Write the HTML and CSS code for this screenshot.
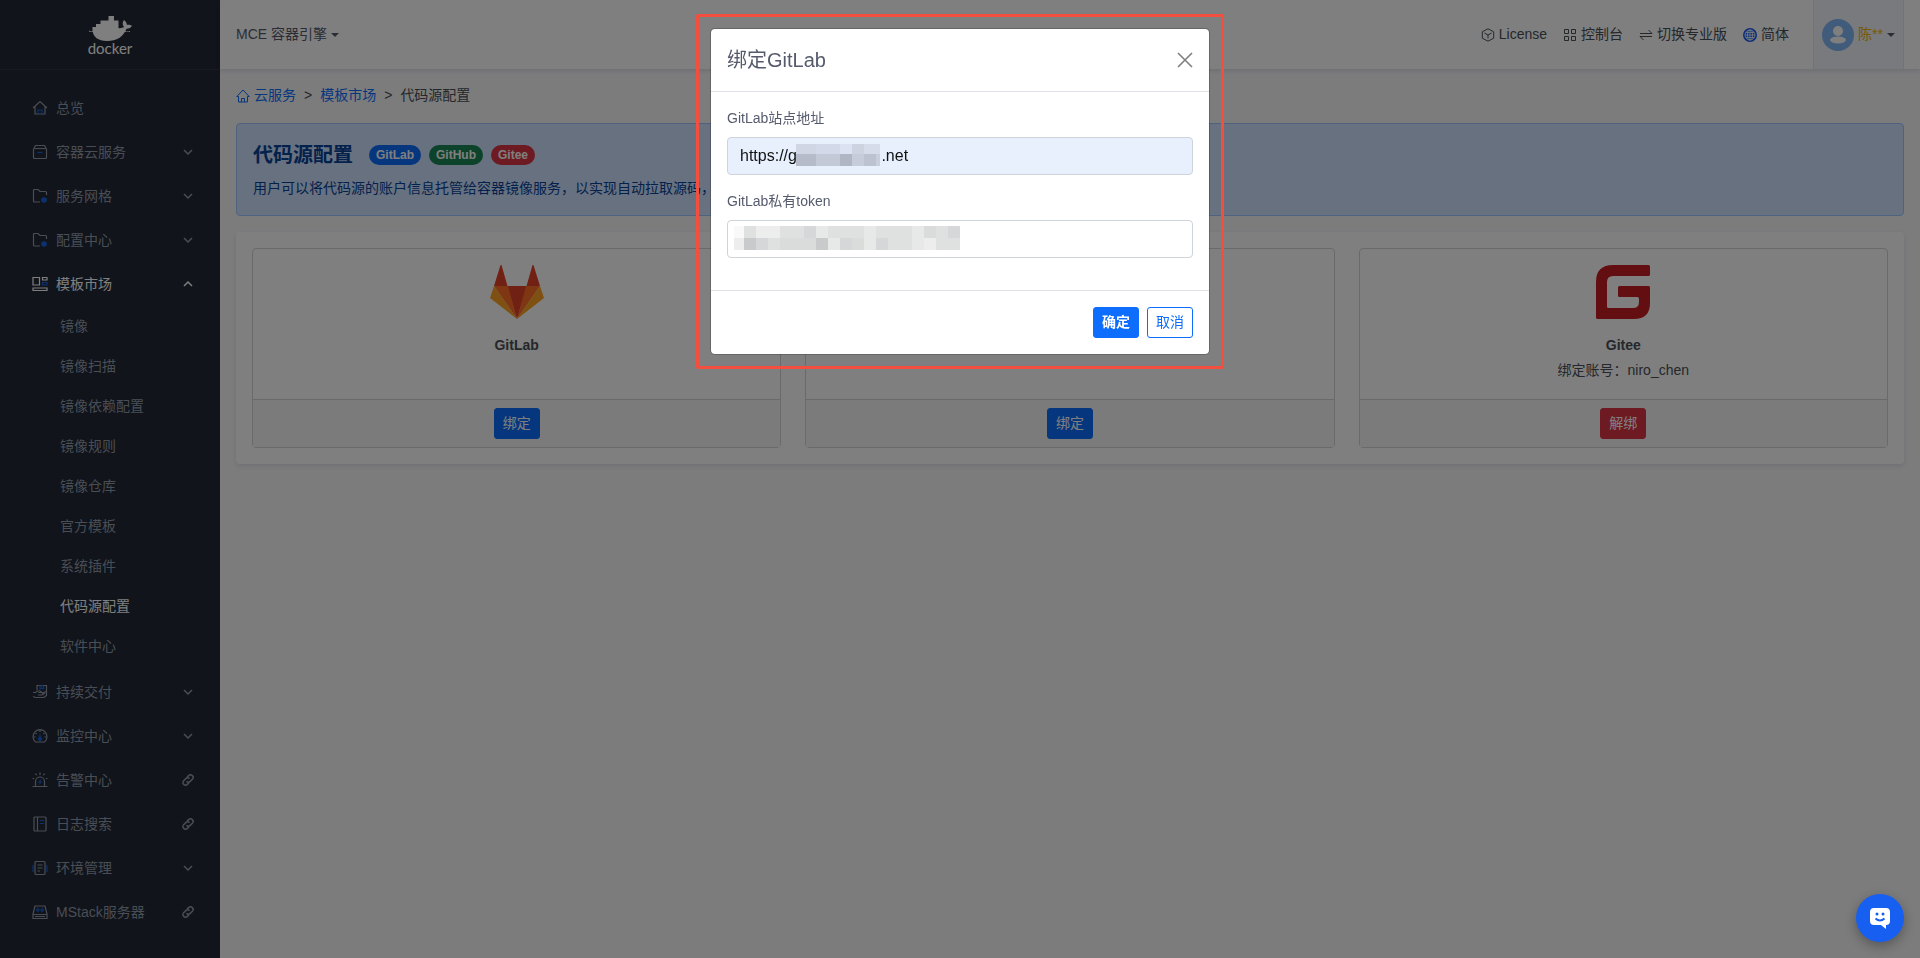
FILE: index.html
```html
<!DOCTYPE html>
<html lang="zh-CN">
<head>
    <meta charset="UTF-8">
    <meta name="viewport" content="width=device-width, initial-scale=1.0">
    <title>代码源配置</title>
    <link rel="stylesheet" href="styles.css">
</head>
<body>
    <!-- shared icons -->
    <svg class="sprite" aria-hidden="true">
        <symbol id="i-down" viewBox="0 0 12 12"><path d="M2 4l4 4 4-4"/></symbol>
        <symbol id="i-up" viewBox="0 0 12 12"><path d="M2 8l4-4 4 4"/></symbol>
        <symbol id="i-link" viewBox="0 0 12 12"><path d="M5 3.2l1.6-1.6a2.6 2.6 0 0 1 3.7 3.7L8.200 7.400a2.600 2.600 0 0 1-3.700 0M7 8.800l-1.600 1.600a2.600 2.600 0 0 1-3.700-3.700L3.800 4.600a2.600 2.600 0 0 1 3.700 0"/></symbol>
        <symbol id="i-folder" viewBox="0 0 16 16"><path d="M8 14H2.500a1 1 0 0 1-1-1V2.500a1 1 0 0 1 1-1H6l2 2h5.500a1 1 0 0 1 1 1V7"/><circle class="fill" cx="12" cy="12" r="2.800"/></symbol>
    </svg>

    <div class="layout">
        <aside class="sidebar">
            <a class="logo" href="#">
                <svg width="44" height="26" viewBox="0 0 44 26"><path d="M20.500 0H26v4.500h4.500V12c2 .5 4-.2 5.500-1-1.700-2-1.800-5 0-7 2 1.500 2.800 3 2.800 4.800 2-.4 4 0 5.200 1-1 2-3 3-5.500 3C35 21 29 25 19 25 10 25 5 21 4.500 14v-3H8V8h4.500V4.500h8z"/><path d="M1 14.500c1.500 1 3 1 4.500 0v1.200H1zM37 15c1.500.8 3 .8 5 0v1h-5z"/></svg>
                <span>docker</span>
            </a>
            <nav class="menu">
                <a class="menu-item" href="#">
                    <svg class="icon" viewBox="0 0 16 16"><path d="M1 8l7-6.500L15 8M3 6.500V14h10V6.500"/><path class="accent" d="M6 14v-4h4v4"/></svg>
                    <span>总览</span>
                </a>
                <a class="menu-item" href="#">
                    <svg class="icon" viewBox="0 0 16 16"><rect x="1.500" y="4.500" width="13" height="10" rx="1"/><path d="M1.800 4.500l1.700-3h9l1.700 3"/><path class="accent" d="M5.500 8.500h5"/></svg>
                    <span>容器云服务</span>
                    <svg class="arrow"><use href="#i-down"/></svg>
                </a>
                <a class="menu-item" href="#">
                    <svg class="icon"><use href="#i-folder"/></svg>
                    <span>服务网格</span>
                    <svg class="arrow"><use href="#i-down"/></svg>
                </a>
                <a class="menu-item" href="#">
                    <svg class="icon"><use href="#i-folder"/></svg>
                    <span>配置中心</span>
                    <svg class="arrow"><use href="#i-down"/></svg>
                </a>
                <a class="menu-item active" href="#">
                    <svg class="icon" viewBox="0 0 16 16"><path d="M1 1.500h6.500V9H1zM1 12h14v2.500H1zM10.500 1.500H15V4h-4.500z"/><path class="accent" d="M10.500 6.500H15V9h-4.500z"/></svg>
                    <span>模板市场</span>
                    <svg class="arrow"><use href="#i-up"/></svg>
                </a>
                <div class="submenu">
                    <a href="#">镜像</a>
                    <a href="#">镜像扫描</a>
                    <a href="#">镜像依赖配置</a>
                    <a href="#">镜像规则</a>
                    <a href="#">镜像仓库</a>
                    <a href="#">官方模板</a>
                    <a href="#">系统插件</a>
                    <a class="active" href="#">代码源配置</a>
                    <a href="#">软件中心</a>
                </div>
                <a class="menu-item" href="#">
                    <svg class="icon" viewBox="0 0 16 16"><path d="M5 6V1.500h9.500v10L12 13.500H3.500L1 12.500M1 8.500h2.500l2-1.500H8l2 1.500H6.500M10 9.500l4-2M6 11h4l3-2"/><path class="accent" d="M8 2v3l1.700-1L11.500 5V2z"/></svg>
                    <span>持续交付</span>
                    <svg class="arrow"><use href="#i-down"/></svg>
                </a>
                <a class="menu-item" href="#">
                    <svg class="icon" viewBox="0 0 16 16"><path d="M3.500 14a7 7 0 1 1 9 0zM8 2v2M3.500 5l1 1M12.500 5l-1 1M2 9h1.500M14 9h-1.500"/><path class="fill" d="M8 5l1 4.200a2 2 0 1 1-2 0z"/></svg>
                    <span>监控中心</span>
                    <svg class="arrow"><use href="#i-down"/></svg>
                </a>
                <a class="menu-item" href="#">
                    <svg class="icon" viewBox="0 0 16 16"><path d="M.5 14.500h15M3.500 14V9.500a4.500 4.500 0 0 1 9 0V14M8 .5V3M3.500 1.500l1 1.700M12.500 1.500l-1 1.700M.5 6.500h1.700M15.500 6.500h-1.700"/><path class="fill" d="M9 7l-3 3.500h1.700L7.200 13l3-3.500H8.500z"/></svg>
                    <span>告警中心</span>
                    <svg class="arrow"><use href="#i-link"/></svg>
                </a>
                <a class="menu-item" href="#">
                    <svg class="icon" viewBox="0 0 16 16"><rect x="2" y="1" width="12" height="14" rx="1"/><path d="M5.500 1v14"/><path class="accent" d="M8 4.500h4M8 7.500h4"/></svg>
                    <span>日志搜索</span>
                    <svg class="arrow"><use href="#i-link"/></svg>
                </a>
                <a class="menu-item" href="#">
                    <svg class="icon" viewBox="0 0 16 16"><rect x="3" y="1.500" width="10" height="13" rx="1"/><path d="M5.500 5h5M5.500 8h5M5.500 11H8"/><path class="accent" d="M1 5v7M15 5v7"/></svg>
                    <span>环境管理</span>
                    <svg class="arrow"><use href="#i-down"/></svg>
                </a>
                <a class="menu-item" href="#">
                    <svg class="icon" viewBox="0 0 16 16"><path d="M1 10L3 2h10l2 8v4.500H1zM1 10.500h14M3 12.500h10"/><path class="accent" d="M6.500 4L4.500 6l2 2M9.500 4l2 2-2 2M6 6h4"/></svg>
                    <span>MStack服务器</span>
                    <svg class="arrow"><use href="#i-link"/></svg>
                </a>
            </nav>
        </aside>

        <div class="main">
            <header class="topbar">
                <button class="engine caret" type="button">MCE 容器引擎</button>
                <div class="tools">
                    <a href="#">
                        <svg width="14" height="14" viewBox="0 0 14 14"><path d="M7 .8l5.700 3v6.400L7 13.200l-5.700-3V3.800zM3.500 5L7 7l3.500-2M7 7v3.500"/></svg>
                        License
                    </a>
                    <a href="#">
                        <svg width="14" height="14" viewBox="0 0 14 14"><path d="M1.500 1.500h4v4h-4zM8.500 1.500h4v4h-4zM1.500 8.500h4v4h-4zM8.500 8.500h4v4h-4z"/></svg>
                        控制台
                    </a>
                    <a href="#">
                        <svg width="14" height="14" viewBox="0 0 14 14"><path d="M1 5.500h12L9.500 2M13 8.500H1L4.500 12"/></svg>
                        切换专业版
                    </a>
                    <a href="#">
                        <svg class="globe" width="14" height="14" viewBox="0 0 14 14"><circle cx="7" cy="7" r="7"/><path d="M7 2v10M2 7h10M3 4.500h8M3 9.500h8"/><ellipse cx="7" cy="7" rx="2.500" ry="5"/><ellipse cx="7" cy="7" rx="5" ry="5"/></svg>
                        简体
                    </a>
                </div>
                <button class="user caret" type="button">
                    <svg width="32" height="32" viewBox="0 0 32 32"><circle cx="16" cy="16" r="16" fill="#82b6f5"/><circle cx="16" cy="12" r="5" fill="#fff"/><ellipse cx="16" cy="21" rx="8" ry="3.500" fill="#fff"/></svg>
                    <span>陈**</span>
                </button>
            </header>

            <main class="content">
                <nav class="breadcrumb">
                    <a href="#">
                        <svg width="14" height="14" viewBox="0 0 14 14"><path d="M.8 7.500L7 1l6.200 6.500H11.500V13h-9V7.500zM5.500 13V9.500h3V13"/></svg>
                        云服务
                    </a>
                    <span>&gt;</span>
                    <a href="#">模板市场</a>
                    <span>&gt;</span>
                    <span>代码源配置</span>
                </nav>

                <section class="intro">
                    <div class="intro-head">
                        <h1>代码源配置</h1>
                        <span class="badge blue">GitLab</span>
                        <span class="badge green">GitHub</span>
                        <span class="badge red">Gitee</span>
                    </div>
                    <p>用户可以将代码源的账户信息托管给容器镜像服务，以实现自动拉取源码，</p>
                </section>

                <section class="sources">
                    <article class="card">
                        <div class="card-body">
                            <svg width="54" height="54" viewBox="0 0 54 54"><path fill="#e24329" d="M27 54L17 21h20zM11.500 0h-1L4 21h13.500zM42.500 0h1L50 21H36.500z"/><path fill="#fc6d26" d="M27 54L4 21h14zM27 54l23-33H36z"/><path fill="#fca326" d="M4 21L0 33l27 21zM50 21l4 12-27 21z"/></svg>
                            <h2>GitLab</h2>
                        </div>
                        <div class="card-footer"><button class="btn primary" type="button">绑定</button></div>
                    </article>
                    <article class="card">
                        <div class="card-body">
                            <svg width="54" height="54" viewBox="0 0 16 16"><path d="M8 0C3.580 0 0 3.580 0 8c0 3.540 2.290 6.530 5.470 7.590.4.070.55-.17.55-.38 0-.19-.01-.82-.01-1.490-2.010.37-2.530-.49-2.690-.94-.09-.23-.48-.94-.82-1.130-.28-.15-.68-.52-.01-.53.63-.01 1.080.58 1.230.82.72 1.210 1.870.87 2.330.66.07-.52.28-.87.51-1.070-1.780-.2-3.640-.89-3.640-3.950 0-.87.31-1.590.82-2.150-.08-.2-.36-1.020.08-2.120 0 0 .67-.21 2.200.82a7.600 7.600 0 0 1 4 0c1.530-1.040 2.200-.82 2.200-.82.44 1.100.16 1.920.08 2.120.51.56.82 1.270.82 2.150 0 3.070-1.870 3.750-3.650 3.950.29.25.54.73.54 1.480 0 1.070-.01 1.930-.01 2.200 0 .21.15.46.55.38A8 8 0 0 0 16 8c0-4.420-3.580-8-8-8z"/></svg>
                            <h2>GitHub</h2>
                        </div>
                        <div class="card-footer"><button class="btn primary" type="button">绑定</button></div>
                    </article>
                    <article class="card">
                        <div class="card-body">
                            <svg width="54" height="54" viewBox="0 0 54 54"><path fill="#c71d23" d="M17 0h35.500Q54 0 54 1.500v8q0 1.500-1.500 1.500H17q-6 0-6 6v24.500q0 1.500 1.500 1.500H37q6 0 6-6v-3q0-2-1.500-2h-18Q22 32 22 30.500v-8q0-1.500 1.500-1.500h29q1.500 0 1.500 1.500V38q0 16-16 16H1.500Q0 54 0 52.500V17Q0 0 17 0z"/></svg>
                            <h2>Gitee</h2>
                            <p>绑定账号：niro_chen</p>
                        </div>
                        <div class="card-footer"><button class="btn danger" type="button">解绑</button></div>
                    </article>
                </section>
            </main>
        </div>
    </div>

    <div class="backdrop">
        <form class="modal" role="dialog" aria-labelledby="modal-title">
            <div class="modal-header">
                <h2 id="modal-title">绑定GitLab</h2>
                <button class="close" type="button" aria-label="关闭">
                    <svg width="16" height="16" viewBox="0 0 16 16"><path d="M1 1l14 14M15 1L1 15"/></svg>
                </button>
            </div>
            <div class="modal-body">
                <label for="site">GitLab站点地址</label>
                <div class="field">
                    <input class="filled" id="site" type="text" value="https://g                   .net">
                    <svg class="mask mask-site" width="84" height="22" shape-rendering="crispEdges"><path fill="#d0d6e4" d="M0 0h20v10H0z"/><path fill="#d3d9e8" d="M20 0h24v10H20z"/><path fill="#dce2f1" d="M44 0h12v10H44z"/><path fill="#cdd3e1" d="M56 0h12v10H56z"/><path fill="#d6dcea" d="M68 0h16v10H68z"/><path fill="#b5bbc9" d="M0 10h20v12H0z"/><path fill="#c3c9d7" d="M20 10h24v12H20z"/><path fill="#b0b6c4" d="M44 10h12v12H44z"/><path fill="#c6ccda" d="M56 10h12v12H56z"/><path fill="#bcc2cf" d="M68 10h12v12H68z"/><path fill="#c8cedc" d="M80 10h4v12h-4z"/></svg>
                </div>
                <label for="token">GitLab私有token</label>
                <div class="field">
                    <input id="token" type="text">
                    <svg class="mask mask-token" width="226" height="24" shape-rendering="crispEdges"><path fill="#dfe0e0" d="M10 0h216v24H10z"/><path fill="#f9f9f9" d="M0 0h10v12H0z"/><path fill="#ededed" d="M0 12h10v12H0zM22 0h24v12H22zM190 12h12v12h-12z"/><path fill="#c9cacc" d="M10 12h12v12H10zM82 12h12v12H82z"/><path fill="#d6d7d9" d="M22 12h12v12H22zM70 0h12v12H70zM106 12h12v12h-12zM142 12h12v12h-12zM214 0h12v12h-12z"/><path fill="#e7e8e8" d="M82 0h12v12H82zM94 12h12v12H94zM130 0h12v24h-12zM178 0h12v24h-12z"/><path fill="#dadbdb" d="M46 12h36v12H46zM118 12h12v12h-12zM190 0h12v12h-12z"/></svg>
                </div>
            </div>
            <div class="modal-footer">
                <button class="btn primary strong" type="submit">确定</button>
                <button class="btn outline" type="button">取消</button>
            </div>
        </form>
    </div>

    <button class="chat" type="button" aria-label="在线客服">
        <svg width="22" height="22" viewBox="0 0 22 22"><path fill="#fff" d="M5 1h12a4 4 0 0 1 4 4v9a4 4 0 0 1-4 4v4l-5-4H5a4 4 0 0 1-4-4V5a4 4 0 0 1 4-4z"/><circle cx="8" cy="7" r="1.500"/><circle cx="14" cy="7" r="1.500"/><path class="smile" d="M6.500 11.500q4.500 4 9 0"/></svg>
    </button>
</body>
</html>
```
FILE: styles.css
```css
* {
    box-sizing: border-box;
}

body {
    margin: 0;
    font-family: "Liberation Sans", "Noto Sans CJK SC", sans-serif;
    font-size: 14px;
    line-height: 21px;
    color: #495057;
    background-color: #f8f8fb;
}

a {
    color: inherit;
    text-decoration: none;
}

h1, h2, p {
    margin: 0;
}

button, input {
    font-family: inherit;
    color: inherit;
}

button {
    font-size: 14px;
    line-height: 21px;
    cursor: pointer;
}

svg {
    flex-shrink: 0;
}

.sprite {
    position: absolute;
    width: 0;
    height: 0;
}

.layout {
    display: flex;
    min-height: 100vh;
}

/* sidebar */
.sidebar {
    width: 220px;
    flex-shrink: 0;
    background-color: #222836;
    color: #929ba8;
}

.logo {
    display: flex;
    flex-direction: column;
    align-items: center;
    height: 70px;
    padding-top: 16px;
    border-bottom: 1px solid #303644;
    color: #fff;
    font-family: Lato, sans-serif;
    font-size: 15px;
    line-height: 12px;
}

.logo svg {
    fill: #fff;
}

.menu {
    padding: 16px 0;
}

.menu-item {
    display: flex;
    align-items: center;
    gap: 8px;
    height: 44px;
    padding: 0 26px 0 32px;
}

.icon {
    width: 16px;
    height: 16px;
}

.icon, .arrow {
    fill: none;
    stroke: currentColor;
    stroke-width: 1.2;
}

.arrow {
    width: 12px;
    height: 12px;
    margin-left: auto;
    stroke-width: 1.5;
}

.accent {
    stroke: #1764dd;
}

.fill {
    fill: #1764dd;
    stroke: none;
}

.submenu {
    padding-bottom: 4px;
}

.submenu a {
    display: block;
    padding-left: 60px;
    line-height: 40px;
}

.menu .active {
    color: #fff;
}

/* top bar */
.main {
    flex: 1;
    min-width: 0;
}

.topbar {
    display: flex;
    align-items: center;
    height: 69px;
    padding: 0 16px;
    background-color: #fff;
    box-shadow: 0 2px 4px rgba(15, 34, 58, 0.12);
}

.engine, .user {
    display: flex;
    align-items: center;
    gap: 4px;
    padding: 0;
    border: none;
    background: none;
    color: #555b6d;
}

.caret::after {
    content: "";
    border: 4px solid transparent;
    border-top-color: currentColor;
    border-bottom: 0;
}

.tools {
    display: flex;
    gap: 16px;
    margin-left: auto;
    margin-right: 24px;
}

.tools a {
    display: flex;
    align-items: center;
    gap: 4px;
}

.tools svg, .breadcrumb svg {
    fill: none;
    stroke: currentColor;
}

.tools .globe {
    stroke: #fff;
    stroke-width: 0.8;
}

.globe circle {
    fill: #175cf0;
    stroke: none;
}

.user {
    height: 100%;
    padding: 0 8px;
    background-color: #f3f5fb;
    border: solid #e3e6ee;
    border-width: 0 1px;
}

.user span {
    color: #f1b000;
}

/* content */
.content {
    padding: 16px;
}

.breadcrumb {
    display: flex;
    gap: 8px;
    margin-bottom: 17px;
}

.breadcrumb a {
    display: flex;
    align-items: center;
    gap: 4px;
    color: #0d6efd;
}

.intro {
    margin-bottom: 16px;
    padding: 16px;
    background-color: #cfe2ff;
    border: 1px solid #9ec5fe;
    border-radius: 4px;
    color: #084298;
}

.intro-head {
    display: flex;
    align-items: center;
    gap: 8px;
    margin-bottom: 8px;
}

.intro h1 {
    margin-right: 8px;
    font-size: 20px;
    line-height: 30px;
}

.badge {
    padding: 0 7px;
    border-radius: 10px;
    color: #fff;
    font-size: 12px;
    font-weight: bold;
    line-height: 20px;
}

.blue {
    background-color: #0d6efd;
}

.green {
    background-color: #198754;
}

.red {
    background-color: #dc3545;
}

.sources {
    display: grid;
    grid-template-columns: repeat(3, 1fr);
    gap: 24px;
    padding: 16px;
    background-color: #fff;
    border-radius: 4px;
    box-shadow: 0 2px 4px rgba(15, 34, 58, 0.1);
}

.card {
    border: 1px solid #d5d5d7;
    border-radius: 4px;
    text-align: center;
}

.card-body {
    display: flex;
    flex-direction: column;
    align-items: center;
    gap: 4px;
    min-height: 150px;
    padding: 16px;
}

.card-body h2 {
    margin-top: 12px;
    font-size: 14px;
    line-height: 21px;
}

.card-footer {
    padding: 8px;
    background-color: #f7f7f7;
    border-top: 1px solid #d5d5d7;
}

.btn {
    padding: 4px 8px;
    border: 1px solid #0d6efd;
    border-radius: 3px;
}

.primary {
    background-color: #0d6efd;
    color: #fff;
}

.danger {
    background-color: #dc3545;
    border-color: #dc3545;
    color: #fff;
}

.outline {
    background-color: #fff;
    color: #0d6efd;
}

.strong {
    font-weight: bold;
}

/* dialog */
.backdrop {
    position: fixed;
    inset: 0;
    display: flex;
    justify-content: center;
    align-items: flex-start;
    padding-top: 28px;
    background-color: rgba(0, 0, 0, 0.5);
}

.modal {
    position: relative;
    width: 100%;
    max-width: 500px;
    background-color: #fff;
    background-clip: padding-box;
    border: 1px solid rgba(0, 0, 0, 0.2);
    border-radius: 5px;
    color: #555b6d;
}

/* highlight frame around the dialog */
.modal::after {
    content: "";
    position: absolute;
    inset: -15px;
    border: 3px solid #f44e3f;
    border-radius: 2px;
    pointer-events: none;
}

.modal-header {
    display: flex;
    align-items: center;
    justify-content: space-between;
    padding: 16px;
    border-bottom: 1px solid #dfe1e6;
}

.modal-header h2 {
    font-size: 20px;
    font-weight: normal;
    line-height: 30px;
}

.close {
    display: flex;
    padding: 0;
    border: none;
    background: none;
}

.close svg {
    stroke: #7f7f7f;
    stroke-width: 1.6;
}

.modal-body {
    padding: 16px;
}

.modal-body label {
    display: block;
    margin-bottom: 8px;
}

.field {
    position: relative;
    margin-bottom: 16px;
}

.field input {
    display: block;
    width: 100%;
    height: 38px;
    padding: 0 12px;
    border: 1px solid #ced4da;
    border-radius: 4px;
    background-color: #fff;
    color: #111;
    font-size: 16px;
}

.field .filled {
    background-color: #e8f0fe;
}

.mask {
    position: absolute;
}

.mask-site {
    top: 7px;
    left: 69px;
}

.mask-token {
    top: 6px;
    left: 7px;
}

.modal-footer {
    display: flex;
    justify-content: flex-end;
    gap: 8px;
    padding: 16px;
    border-top: 1px solid #dfe1e6;
}

/* support chat */
.chat {
    position: fixed;
    right: 16px;
    bottom: 16px;
    display: flex;
    align-items: center;
    justify-content: center;
    width: 48px;
    height: 48px;
    padding: 0;
    border: none;
    border-radius: 50%;
    background-color: #175ff0;
    box-shadow: 0 4px 12px rgba(0, 0, 0, 0.3);
}

.chat circle {
    fill: #175ff0;
}

.smile {
    fill: none;
    stroke: #175ff0;
    stroke-width: 2;
}
```
